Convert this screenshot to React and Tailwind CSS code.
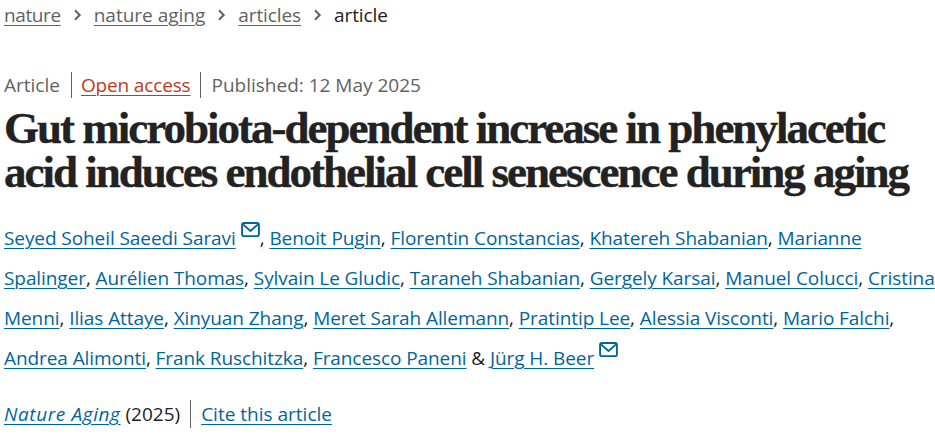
import React from 'react';

const authorLink = 'text-[#069] underline underline-offset-[3px] decoration-1';
const crumbLink = 'underline underline-offset-[3px] decoration-1';

const Mail = () => (
  <svg viewBox="0 0 20 16" className="inline-block w-[19px] h-[15px] align-[8px] ml-[5px]" fill="none" stroke="#069" strokeWidth="2">
    <rect x="1" y="1" width="18" height="14" rx="2" />
    <path d="M2 2.5l8 7 8-7" />
  </svg>
);

const Chevron = () => (
  <svg viewBox="0 0 10 14" className="w-[9px] h-[12px] mx-[12px]" fill="none" stroke="#626262" strokeWidth="2.4">
    <path d="M2 1.5L7.5 7 2 12.5" />
  </svg>
);

const authors = [
  ['Seyed Soheil Saeedi Saravi', true, ', '],
  ['Benoit Pugin', false, ', '],
  ['Florentin Constancias', false, ', '],
  ['Khatereh Shabanian', false, ', '],
  ['Marianne Spalinger', false, ', '],
  ['Aurélien Thomas', false, ', '],
  ['Sylvain Le Gludic', false, ', '],
  ['Taraneh Shabanian', false, ', '],
  ['Gergely Karsai', false, ', '],
  ['Manuel Colucci', false, ', '],
  ['Cristina Menni', false, ', '],
  ['Ilias Attaye', false, ', '],
  ['Xinyuan Zhang', false, ', '],
  ['Meret Sarah Allemann', false, ', '],
  ['Pratintip Lee', false, ', '],
  ['Alessia Visconti', false, ', '],
  ['Mario Falchi', false, ', '],
  ['Andrea Alimonti', false, ', '],
  ['Frank Ruschitzka', false, ', '],
  ['Francesco Paneni', false, ' & '],
  ['Jürg H. Beer', true, ''],
];

export default function App() {
  return (
    <div className="w-[935px] h-[435px] overflow-hidden bg-white pl-1 font-['Open_Sans',sans-serif] text-[19px] text-[#222]">
      {/* Breadcrumbs */}
      <nav className="flex items-center h-[30px] text-[#626262]">
        <a className={`${crumbLink} tracking-[-0.4px]`}>nature</a>
        <Chevron />
        <a className={crumbLink}>nature aging</a>
        <Chevron />
        <a className={`${crumbLink} tracking-[-0.1px]`}>articles</a>
        <Chevron />
        <span className="text-[#222] tracking-[-0.1px]">article</span>
      </nav>

      {/* Meta */}
      <div className="flex items-center mt-[42px] h-[26px] text-[#626262]">
        <span className="pr-[11px] border-r border-[#626262] leading-[26px]">Article</span>
        <a className="pl-[9px] pr-[10px] border-r border-[#626262] leading-[26px] text-[#c0391b] underline underline-offset-[3px] decoration-1 tracking-[-0.15px]">Open access</a>
        <span className="pl-[10px]">Published: 12 May 2025</span>
      </div>

      {/* Title */}
      <h1 className="mt-[8px] font-['Liberation_Serif',serif] font-bold text-[45px] leading-[44px] tracking-[-2px] [-webkit-text-stroke:0.4px_#222] text-[#222]">
        Gut microbiota-dependent increase in phenylacetic
        <br />
        acid induces endothelial cell senescence during aging
      </h1>

      {/* Authors */}
      <p className="mt-[24px] leading-[40px] w-[931px] tracking-[-0.08px]">
        {authors.map(([name, mail, sep]) => (
          <React.Fragment key={name}>
            <a className={authorLink}>{name}</a>
            {mail && <Mail />}
            {sep}
          </React.Fragment>
        ))}
      </p>

      {/* Citation */}
      <div className="flex items-center mt-[22px] h-[28px]">
        <span className="pr-[10px] border-r border-[#626262] leading-[28px]">
          <a className={`${authorLink} italic tracking-[0.6px]`}>Nature Aging</a> (2025)
        </span>
        <a className={`${authorLink} pl-[10px]`}>Cite this article</a>
      </div>
    </div>
  );
}
